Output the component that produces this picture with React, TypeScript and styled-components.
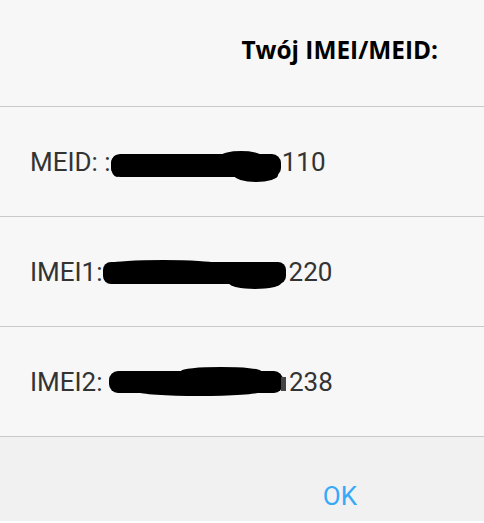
import styled, { createGlobalStyle } from "styled-components";

const GlobalStyle = createGlobalStyle`
  html, body {
    margin: 0;
    padding: 0;
    background: #ffffff;
  }
`;

const Dialog = styled.div({
  width: "484px",
  height: "521px",
  display: "flex",
  flexDirection: "column",
  background: "#f7f7f7",
  fontFamily: "Roboto, \"Liberation Sans\", sans-serif",
});

const Header = styled.div({
  height: "106px",
  boxSizing: "border-box",
  display: "flex",
  alignItems: "center",
  justifyContent: "flex-end",
  paddingRight: "46px",
  paddingBottom: "8px",
});

const Title = styled.h2({
  margin: 0,
  fontFamily: "\"Open Sans\", \"Noto Sans\", sans-serif",
  fontWeight: 700,
  fontSize: "24.4px",
  color: "#000",
});

const Row = styled.div({
  height: "110px",
  boxSizing: "border-box",
  borderTop: "1px solid #c9c9c9",
  display: "flex",
  alignItems: "center",
  paddingLeft: "30px",
  fontSize: "26px",
  color: "#333333",
  whiteSpace: "pre",
});

const Footer = styled.div({
  flex: 1,
  borderTop: "1px solid #c9c9c9",
  background: "#f1f1f1",
  display: "flex",
  alignItems: "flex-start",
  justifyContent: "flex-end",
  paddingTop: "36px",
  paddingRight: "111px",
});

const OkButton = styled.button({
  border: "none",
  background: "transparent",
  fontFamily: "Roboto, \"Liberation Sans\", sans-serif",
  fontSize: "26px",
  lineHeight: "30px",
  color: "#36a9f7",
  padding: "8px 16px",
  cursor: "pointer",
});

const Scribble = styled.svg({
  display: "block",
  flexShrink: 0,
});

type BlobProps = { width: number; children: React.ReactNode; offset?: number };

const Blob = ({ width, children, offset = 0 }: BlobProps) => (
  <Scribble width={width} height={34} viewBox={`0 0 ${width} 34`} style={{ marginTop: offset }}>
    <g fill="#000">{children}</g>
  </Scribble>
);

const rows = [
  {
    label: "MEID: :",
    suffix: "110",
    blob: (
      <Blob width={171} offset={8}>
        <rect x={0} y={5} width={170} height={23} rx={9} />
        <ellipse cx={130} cy={7} rx={20} ry={5} />
        <ellipse cx={145} cy={26} rx={22} ry={7} />
        <ellipse cx={6} cy={17} rx={6} ry={11} />
      </Blob>
    ),
  },
  {
    label: "IMEI1:",
    suffix: "220",
    blob: (
      <Blob width={186} offset={6}>
        <rect x={0} y={4} width={183} height={22} rx={8} />
        <ellipse cx={152} cy={25} rx={26} ry={6} />
        <ellipse cx={60} cy={5} rx={50} ry={3} />
      </Blob>
    ),
  },
  {
    label: "IMEI2: ",
    suffix: "238",
    blob: (
      <Blob width={180} offset={4}>
        <rect x={0} y={4} width={174} height={22} rx={9} />
        <ellipse cx={112} cy={4} rx={40} ry={4} />
        <ellipse cx={90} cy={25} rx={60} ry={4} />
        <rect x={172} y={10} width={5} height={14} fill="#444" />
      </Blob>
    ),
  },
];

export default function App() {
  return (
    <>
      <GlobalStyle />
      <Dialog>
        <Header>
          <Title>Twój IMEI/MEID:</Title>
        </Header>
        {rows.map((row) => (
          <Row key={row.label}>
            <span>{row.label}</span>
            {row.blob}
            <span>{row.suffix}</span>
          </Row>
        ))}
        <Footer>
          <OkButton>OK</OkButton>
        </Footer>
      </Dialog>
    </>
  );
}
